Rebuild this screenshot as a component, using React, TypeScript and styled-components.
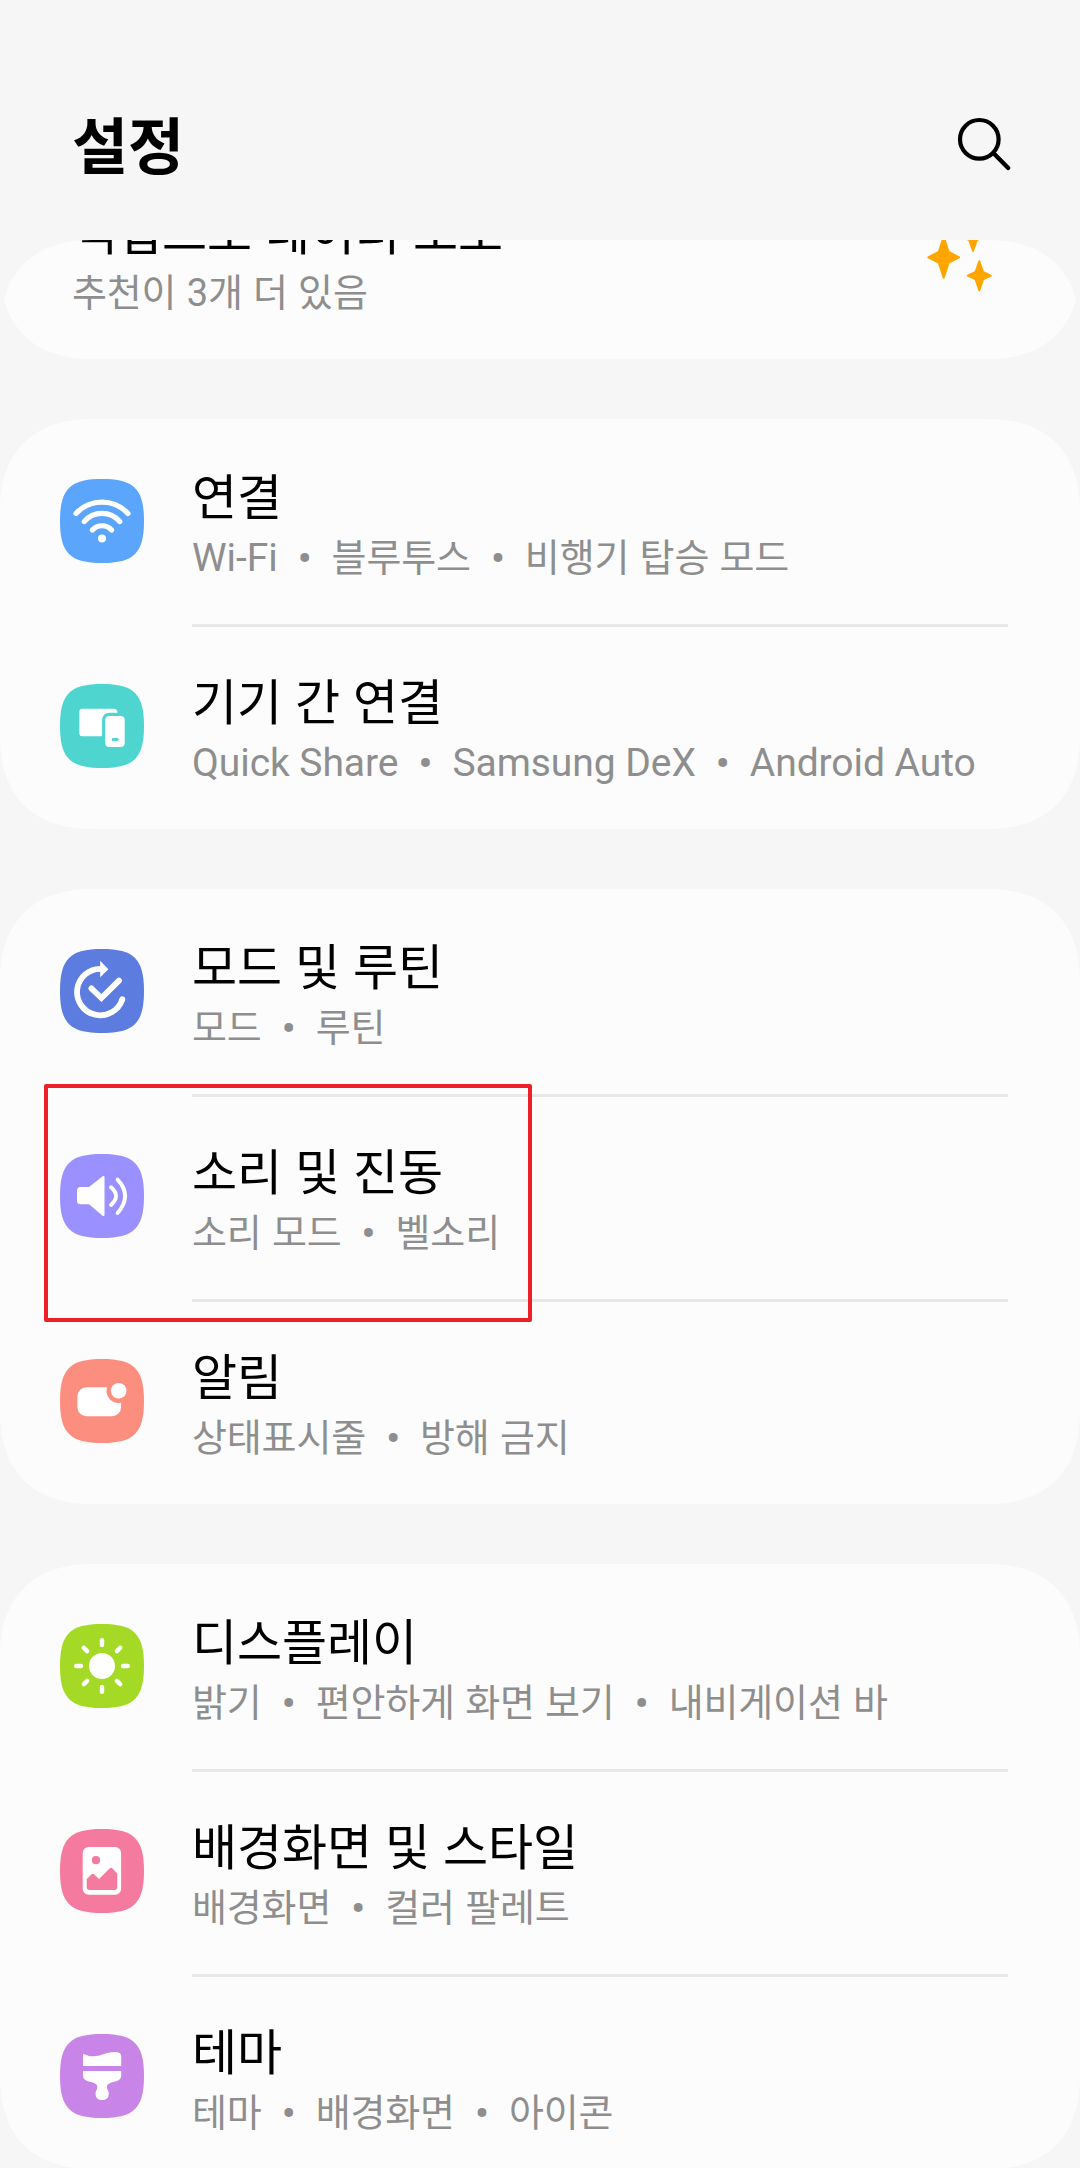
import React from "react";
import styled, { createGlobalStyle } from "styled-components";

const PAGE = "#f6f6f6";
const CARD = "#fcfcfc";

const GlobalStyle = createGlobalStyle`
  html, body { margin: 0; padding: 0; background: ${PAGE}; }
  * { box-sizing: border-box; }
`;

const Screen = styled.main`
  width: 1080px;
  height: 2168px;
  overflow: hidden;
  display: flex;
  flex-direction: column;
  background: ${PAGE};
  color: #000;
  font-family: Roboto, "Noto Sans CJK KR", sans-serif;
`;

const Header = styled.header`
  flex: none;
  height: 240px;
  padding: 108px 68px 0 72px;
  display: flex;
  align-items: flex-start;
  justify-content: space-between;
`;

const PageTitle = styled.h1`
  margin: 0;
  font-size: 61px;
  line-height: 80px;
  font-weight: 700;
`;

const SearchButton = styled.button`
  margin: 6px 0 0;
  padding: 0;
  border: 0;
  background: none;
  width: 56px;
  height: 60px;
  svg { display: block; }
`;

const List = styled.div`
  flex: 1;
  min-height: 0;
  display: flex;
  flex-direction: column;
  gap: 60px;
`;

const Card = styled.section<{ $height: number }>`
  position: relative;
  flex: none;
  height: ${(p) => p.$height}px;
  overflow: hidden;
  background: ${CARD};
`;

const CornerSvg = styled.svg<{ $right?: boolean; $bottom?: boolean }>`
  position: absolute;
  ${(p) => (p.$right ? "right: 0;" : "left: 0;")}
  ${(p) => (p.$bottom ? "bottom: 0;" : "top: 0;")}
  transform: scale(${(p) => (p.$right ? -1 : 1)}, ${(p) => (p.$bottom ? -1 : 1)});
`;

const Row = styled.div`
  position: relative;
  height: 205px;
  padding: 50px 72px 0 60px;
  display: flex;
  gap: 48px;
`;

const IconTile = styled.svg`
  flex: none;
  margin-top: 10px;
  display: block;
`;

const Texts = styled.div`
  display: flex;
  flex-direction: column;
  gap: 4px;
  white-space: nowrap;
`;

const Title = styled.div`
  font-size: 49px;
  line-height: 60px;
  letter-spacing: -0.1px;
  word-spacing: 1px;
`;

const Summary = styled.div`
  font-size: 38px;
  line-height: 50px;
  letter-spacing: -0.15px;
  word-spacing: 1px;
  color: #8e8e8e;
`;

const Latin = styled.span`
  font-size: 39px;
  line-height: 1;
  letter-spacing: -0.06px;
  word-spacing: 0;
`;

const Dot = styled.span`
  display: inline-block;
  width: 54px;
  font-size: 43px;
  line-height: 0;
  vertical-align: -2px;
  text-align: center;
`;

const Divider = styled.hr`
  margin: 0 72px -3px 192px;
  height: 3px;
  border: 0;
  background: #e8e8e8;
`;

const Highlight = styled.div`
  position: absolute;
  z-index: 2;
  left: 44px;
  top: -10px;
  width: 488px;
  height: 238px;
  border: 4px solid #ec2027;
  border-radius: 2px;
`;

const Suggestion = styled.div`
  height: 119px;
  padding: 0 72px 0 72px;
  display: flex;
  justify-content: space-between;
`;

const SuggestionTexts = styled(Texts)`
  margin-top: -36px;
`;

const Sparkles = styled.svg`
  display: block;
  margin-right: 8px;
`;

const CORNER = "M0 0H92C33 0 0 33 0 92Z";

function Corners() {
  return (
    <>
      {[0, 1, 2, 3].map((i) => (
        <CornerSvg key={i} $right={i % 2 === 1} $bottom={i > 1} width="92" height="92" viewBox="0 0 92 92" aria-hidden>
          <path d={CORNER} fill={PAGE} />
        </CornerSvg>
      ))}
    </>
  );
}

const star = (cx: number, cy: number, w: number, h: number) => {
  const a = w * 0.32;
  const b = h * 0.26;
  return `M${cx} ${cy - h}L${cx + a} ${cy - b}L${cx + w} ${cy}L${cx + a} ${cy + b}L${cx} ${cy + h}L${cx - a} ${cy + b}L${cx - w} ${cy}L${cx - a} ${cy - b}Z`;
};

type IconProps = { color: string };

const glyphs: Record<string, (p: IconProps) => React.ReactElement> = {
  wifi: () => (
    <>
      <g fill="none" stroke="#fff" strokeWidth="5.2" strokeLinecap="round">
        <path d="M16 34.4A35.5 35.5 0 0 1 68 34.4" />
        <path d="M24.2 42.6A23.5 23.5 0 0 1 59.8 42.6" />
        <path d="M32.4 51A13 13 0 0 1 51.6 51" />
      </g>
      <circle cx="42" cy="59.4" r="4" fill="#fff" />
    </>
  ),
  devices: ({ color }) => (
    <>
      <path d="M22.3 24.7H54a3.6 3.6 0 0 1 3.4 4H49.3a7.2 7.2 0 0 0-7.2 7.2V52.2H22.3a3 3 0 0 1-3-3V27.7a3 3 0 0 1 3-3Z" fill="#fff" />
      <rect x="45.3" y="32" width="19.4" height="31" rx="4" fill="#fff" />
      <rect x="51.6" y="54" width="7" height="3" rx="1.5" fill={color} />
    </>
  ),
  modes: () => (
    <>
      <g fill="none" stroke="#fff" strokeWidth="5.8" strokeLinecap="round">
        <path d="M41.3 19.9A23.2 23.2 0 1 0 62.3 50.3" strokeLinecap="butt" />
        <path d="M62.3 50.3l-.1 .3" />
        <path d="M31.4 39.4L41.4 49L59 31.6" />
      </g>
      <path d="M40.2 11.8L48.4 20.2L40.2 28.2Z" fill="#fff" />
    </>
  ),
  sound: () => (
    <>
      <path d="M20.5 33H29L42.6 22.3Q44.5 21.3 44.5 23.3V60.7Q44.5 62.7 42.6 61.7L29 50.3H20.5Q17 50.3 17 46.8V36.5Q17 33 20.5 33Z" fill="#fff" />
      <g fill="none" stroke="#fff" strokeWidth="3.9" strokeLinecap="round">
        <path d="M51 33.3Q61 42 51 51" />
        <path d="M57.6 25.6Q72.6 41.5 57.6 59" />
      </g>
    </>
  ),
  notice: ({ color }) => (
    <>
      <rect x="17.4" y="28.3" width="43.6" height="28.9" rx="9" fill="#fff" />
      <circle cx="58.7" cy="31.8" r="12.2" fill={color} />
      <circle cx="58.7" cy="31.8" r="7.8" fill="#fff" />
    </>
  ),
  display: () => (
    <>
      <circle cx="42" cy="42" r="13" fill="#fff" />
      <g stroke="#fff" strokeWidth="4.4" strokeLinecap="round">
        {[0, 45, 90, 135, 180, 225, 270, 315].map((a) => (
          <path key={a} d="M42 16.2V21" transform={`rotate(${a} 42 42)`} />
        ))}
      </g>
    </>
  ),
  wallpaper: ({ color }) => (
    <>
      <rect x="22.7" y="18" width="38.4" height="47.8" rx="6" fill="#fff" />
      <circle cx="36" cy="31.2" r="4.1" fill={color} />
      <path d="M26.7 50.2L31.6 45.2Q32.8 44.2 34 45.2L39 49.9L49.8 39.2Q51 38.2 52.2 39.2L57.3 44.6V58Q57.3 61 54.3 61H29.7Q26.7 61 26.7 58Z" fill={color} />
    </>
  ),
  theme: () => (
    <path
      d="M23 20.6Q23 19.6 24.4 20.2C37 26 43 18 54.5 18Q61.2 18 61.2 21.5V32H23ZM23 37H61.2V41.5Q61.2 46.2 55.5 47.4C49 48.6 46.2 50.6 47 54C47.4 55.8 48.8 57.2 48.8 60Q48.4 66 42.1 66Q35.8 66 35.5 60C35.5 57.2 36.9 55.8 37.3 54C38 50.6 35.2 48.6 28.7 47.4Q23 46.2 23 41.5Z"
      fill="#fff"
    />
  ),
};

type Item = { icon: string; color: string; title: string; parts: string[]; marked?: boolean };

const groups: { height: number; items: Item[] }[] = [
  {
    height: 410,
    items: [
      { icon: "wifi", color: "#5ba5fd", title: "연결", parts: ["Wi-Fi", "블루투스", "비행기 탑승 모드"] },
      { icon: "devices", color: "#4fd5d0", title: "기기 간 연결", parts: ["Quick Share", "Samsung DeX", "Android Auto"] },
    ],
  },
  {
    height: 615,
    items: [
      { icon: "modes", color: "#5c7ce0", title: "모드 및 루틴", parts: ["모드", "루틴"] },
      { icon: "sound", color: "#9b90ff", title: "소리 및 진동", parts: ["소리 모드", "벨소리"], marked: true },
      { icon: "notice", color: "#fc8e80", title: "알림", parts: ["상태표시줄", "방해 금지"] },
    ],
  },
  {
    height: 605,
    items: [
      { icon: "display", color: "#a4da26", title: "디스플레이", parts: ["밝기", "편안하게 화면 보기", "내비게이션 바"] },
      { icon: "wallpaper", color: "#f57a9f", title: "배경화면 및 스타일", parts: ["배경화면", "컬러 팔레트"] },
      { icon: "theme", color: "#c884e6", title: "테마", parts: ["테마", "배경화면", "아이콘"] },
    ],
  },
];

function SettingRow({ item }: { item: Item }) {
  const Glyph = glyphs[item.icon];
  return (
    <Row>
      <IconTile width="84" height="84" viewBox="0 0 84 84" aria-hidden>
        <path d="M0 42C0 10 10 0 42 0S84 10 84 42S74 84 42 84S0 74 0 42Z" fill={item.color} />
        <Glyph color={item.color} />
      </IconTile>
      <Texts>
        <Title>{item.title}</Title>
        <Summary>
          {item.parts.map((part, i) => (
            <React.Fragment key={part}>
              {i > 0 && <Dot>•</Dot>}
              {/^[A-Za-z]/.test(part) ? <Latin>{part}</Latin> : part}
            </React.Fragment>
          ))}
        </Summary>
      </Texts>
      {item.marked && <Highlight />}
    </Row>
  );
}

export default function App() {
  return (
    <Screen>
      <GlobalStyle />
      <Header>
        <PageTitle>설정</PageTitle>
        <SearchButton aria-label="검색">
          <svg width="56" height="60" viewBox="0 0 56 60" fill="none" stroke="#000" strokeLinecap="round">
            <circle cx="23.3" cy="25.3" r="19.3" strokeWidth="4.2" />
            <path d="M37.6 39.2L52.2 54" strokeWidth="4.4" />
          </svg>
        </SearchButton>
      </Header>
      <List>
        <Card $height={119}>
          <Corners />
          <Suggestion>
            <SuggestionTexts>
              <Title>백업으로 데이터 보호</Title>
              <Summary>추천이 3개 더 있음</Summary>
            </SuggestionTexts>
            <Sparkles width="80" height="60" viewBox="920 240 80 60" fill="#ffa500" stroke="#ffa500" strokeLinejoin="round" strokeWidth="2" aria-hidden>
              <path d={star(943.7, 257.3, 15.4, 20.4)} />
              <path d={star(979.3, 275.7, 11.5, 14.5)} />
              <path d={star(973, 236.4, 11.5, 14.5)} />
            </Sparkles>
          </Suggestion>
        </Card>
        {groups.map((group, g) => (
          <Card key={g} $height={group.height}>
            <Corners />
            {group.items.map((item, i) => (
              <React.Fragment key={item.title}>
                {i > 0 && <Divider />}
                <SettingRow item={item} />
              </React.Fragment>
            ))}
          </Card>
        ))}
      </List>
    </Screen>
  );
}
